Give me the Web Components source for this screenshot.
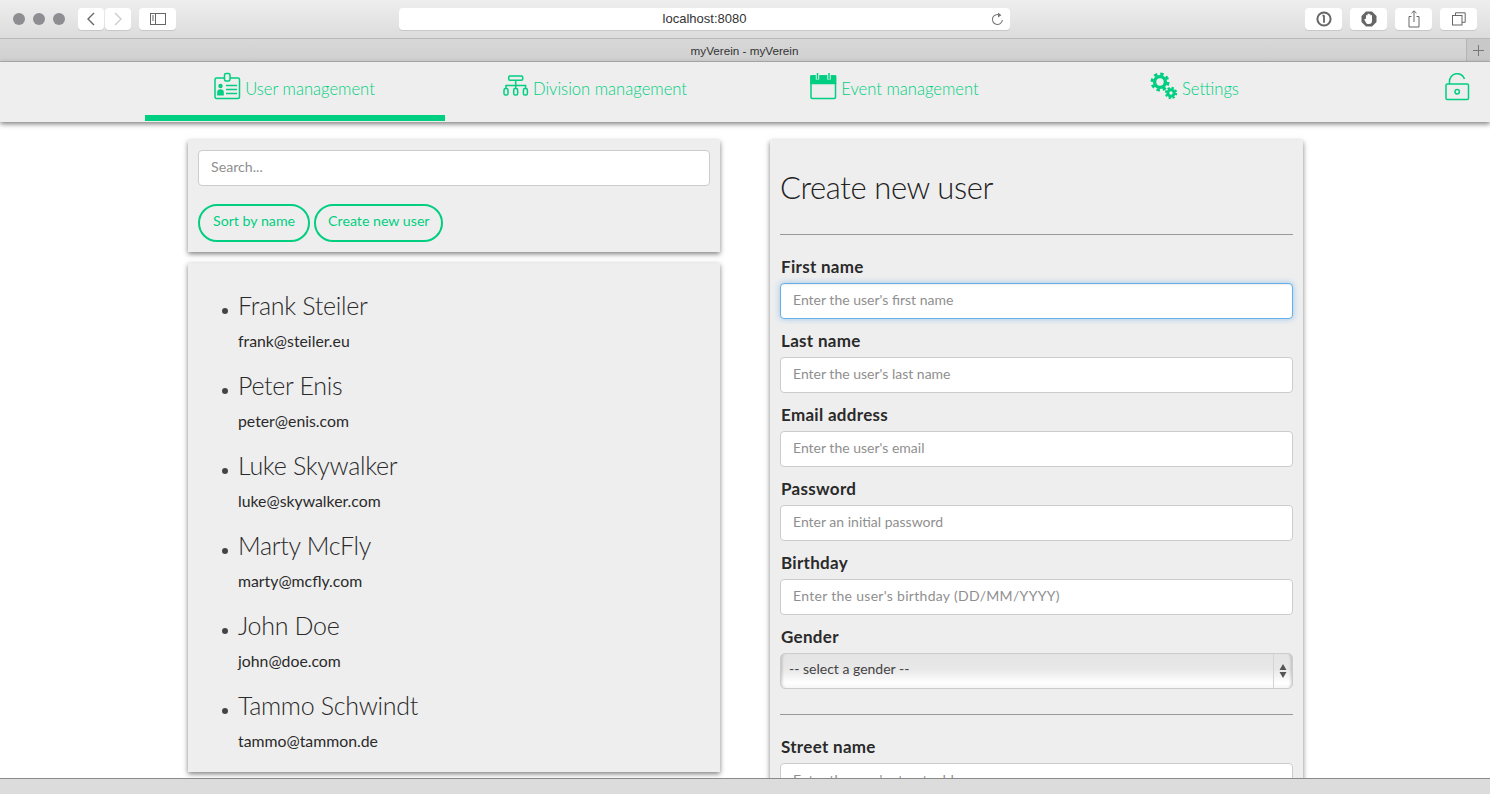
<!DOCTYPE html>
<html lang="en">
<head>
<meta charset="utf-8">
<title>myVerein - myVerein</title>
<style>
    html, body {
        margin: 0;
        height: 100%;
        overflow: hidden;
        background: #fff;
        font-family: "Lato", "Liberation Sans", sans-serif;
        color: #333;
    }

    #page {
        display: flex;
        flex-direction: column;
        height: 794px;
    }

    #content {
        flex: 1;
        min-height: 0;
        overflow: hidden;
        display: grid;
        grid-template-columns: 532px 533px;
        column-gap: 50px;
        align-items: start;
        padding: 18px 0 0 188px;
    }

    #left {
        display: flex;
        flex-direction: column;
        gap: 11px;
    }

    svg {
        display: block;
    }
</style>
</head>
<body>
<div id="page">
    <browser-chrome url="localhost:8080" title="myVerein - myVerein"></browser-chrome>
    <app-nav>
        <nav-item active label="User management">
            <svg slot="icon" width="27" height="28" viewBox="0 0 27 28" fill="none" stroke="#00ce80" stroke-width="1.5">
                <rect x="1" y="6" width="24.5" height="20.5" rx="1.5"/>
                <rect x="10.5" y="1.5" width="5.5" height="7.5" rx="1.5" fill="#eee"/>
                <circle cx="6.5" cy="14" r="2.2" fill="#00ce80" stroke="none"/>
                <path d="M3.2 23.5v-3a3.3 3.3 0 0 1 6.6 0v3z" fill="#00ce80" stroke="none"/>
                <path d="M12 13.5h11M12 17.5h11M12 21.5h11"/>
            </svg>
        </nav-item>
        <nav-item label="Division management" style="--nudge: 0">
            <svg slot="icon" width="26" height="22" viewBox="0 0 26 22" fill="none" stroke="#00ce80" stroke-width="1.5">
                <rect x="5.7" y="1" width="14" height="4.2" rx="1.2"/>
                <path d="M12.7 5.2v8.6M3 13.5v-3h19.6v3"/>
                <rect x="1" y="13.6" width="4" height="6.4" rx="1.6"/>
                <rect x="10.7" y="13.6" width="4" height="6.4" rx="1.6"/>
                <rect x="20.4" y="13.6" width="4" height="6.4" rx="1.6"/>
            </svg>
        </nav-item>
        <nav-item label="Event management">
            <svg slot="icon" width="27" height="28" viewBox="0 0 27 28" fill="none" stroke="#00ce80" stroke-width="1.5">
                <rect x="1" y="4" width="24.5" height="22.5" rx="1.2"/>
                <path d="M1 4h24.5v7.5H1z" fill="#00ce80"/>
                <path d="M7.5 1v6.5M19 1v6.5" stroke="#eee" stroke-width="3.4"/>
                <path d="M7.5 1v6M19 1v6"/>
            </svg>
        </nav-item>
        <nav-item label="Settings">
            <svg slot="icon" width="28" height="28" viewBox="0 0 28 28" fill="none" stroke="#00ce80">
                <circle cx="10" cy="10" r="5.4" stroke-width="3.4"/>
                <circle cx="10" cy="10" r="8" stroke-width="3" stroke-dasharray="3.4 2.88"/>
                <circle cx="21" cy="21" r="3.2" stroke-width="3"/>
                <circle cx="21" cy="21" r="5.1" stroke-width="2.2" stroke-dasharray="2.2 1.8"/>
            </svg>
        </nav-item>
        <svg slot="end" width="25" height="28" viewBox="0 0 25 28" fill="none" stroke="#00ce80" stroke-width="1.5">
            <rect x="1" y="11" width="22.5" height="15.5" rx="1.2"/>
            <path d="M4.5 11V8.5a7.7 7.7 0 0 1 15-2.6"/>
            <circle cx="12.2" cy="18.8" r="2.2"/>
        </svg>
    </app-nav>
    <main id="content">
        <div id="left">
            <search-card></search-card>
            <user-list>
                <user-item name="Frank Steiler" email="frank@steiler.eu"></user-item>
                <user-item name="Peter Enis" email="peter@enis.com"></user-item>
                <user-item name="Luke Skywalker" email="luke@skywalker.com"></user-item>
                <user-item name="Marty McFly" email="marty@mcfly.com"></user-item>
                <user-item name="John Doe" email="john@doe.com"></user-item>
                <user-item name="Tammo Schwindt" email="tammo@tammon.de"></user-item>
            </user-list>
        </div>
        <create-user-form>
            <form-field label="First name" placeholder="Enter the user's first name" focused></form-field>
            <form-field label="Last name" placeholder="Enter the user's last name"></form-field>
            <form-field label="Email address" placeholder="Enter the user's email"></form-field>
            <form-field label="Password" placeholder="Enter an initial password"></form-field>
            <form-field label="Birthday" placeholder="Enter the user's birthday (DD/MM/YYYY)" style="--track: .3px"></form-field>
            <gender-field></gender-field>
            <form-field slot="address" label="Street name" placeholder="Enter the user's street address"></form-field>
        </create-user-form>
    </main>
    <status-bar></status-bar>
</div>

<script>
const chromeTemplate = document.createElement("template");
chromeTemplate.innerHTML = `
    <style>
        :host {
            display: block;
            flex: none;
            font-family: "Liberation Sans", Arial, sans-serif;
            color: #333;
        }

        .toolbar {
            display: flex;
            align-items: center;
            box-sizing: border-box;
            height: 39px;
            padding: 0 13px 1px;
            background: linear-gradient(#eeeeee, #dcdcdc);
            border-bottom: 1px solid #b8b8b8;
        }

        .dots {
            display: flex;
            gap: 8px;
            margin: 0 13px 0 0;
        }

        .dots i {
            width: 12px;
            height: 12px;
            border-radius: 50%;
            background: #8e8d92;
        }

        .btn {
            display: flex;
            align-items: center;
            justify-content: center;
            box-sizing: border-box;
            width: 37px;
            height: 22px;
            background: #fff;
            border-radius: 4px;
            box-shadow: 0 1px 0 #c8c8c8;
        }

        .nav-btn {
            width: 26px;
        }

        .url {
            display: flex;
            align-items: center;
            justify-content: center;
            position: relative;
            width: 611px;
            height: 22px;
            margin-left: 223px;
            background: #fff;
            border-radius: 4px;
            box-shadow: 0 1px 0 #c8c8c8;
            font-size: 13px;
        }

        .reload {
            position: absolute;
            right: 6px;
            top: 4px;
        }

        .right {
            display: flex;
            gap: 8px;
            margin-left: auto;
        }

        .tabs {
            display: flex;
            align-items: center;
            box-sizing: border-box;
            height: 23px;
            background: linear-gradient(#d8d8d8, #d0d0d0);
            border-bottom: 1px solid #b4b4b4;
            font-size: 11.7px;
            color: #333;
        }

        .tab-title {
            flex: 1;
            padding-left: 23px;
            text-align: center;
        }

        .plus {
            display: flex;
            align-items: center;
            justify-content: center;
            align-self: stretch;
            width: 23px;
            background: #c8c8c8;
            border-left: 1px solid #b4b4b4;
        }
    </style>
    <div class="toolbar">
        <div class="dots"><i></i><i></i><i></i></div>
        <div class="btn nav-btn">
            <svg width="10" height="14" viewBox="0 0 10 14" fill="none" stroke="#666" stroke-width="1.4"><path d="M8 1L2 7l6 6"/></svg>
        </div>
        <div class="btn nav-btn" style="margin:0 8px 0 1px">
            <svg width="10" height="14" viewBox="0 0 10 14" fill="none" stroke="#ccc" stroke-width="1.4"><path d="M2 1l6 6-6 6"/></svg>
        </div>
        <div class="btn">
            <svg width="16" height="12" viewBox="0 0 16 12" fill="none" stroke="#666"><rect x=".5" y=".5" width="15" height="11"/><path d="M5.5 .5v11M2 3h2M2 5h2M2 7h2" /></svg>
        </div>
        <div class="url">
            <span class="url-text"></span>
            <svg class="reload" width="13" height="14" viewBox="0 0 13 14" fill="none" stroke="#777" stroke-width="1.1">
                <path d="M9.3 3.4A5 5 0 1 0 11.4 8"/>
                <path d="M7 .6l3.4 2.6L7 5.6z" fill="#777" stroke="none"/>
            </svg>
        </div>
        <div class="right">
            <div class="btn">
                <svg width="16" height="16" viewBox="0 0 16 16" fill="none" stroke="#666" stroke-width="2"><circle cx="8" cy="8" r="6.6"/><path d="M8 4.2v7.6M6.4 4.6H8" stroke-width="1.8"/></svg>
            </div>
            <div class="btn">
                <svg width="16" height="16" viewBox="0 0 16 16"><path d="M5 .5h6L15.5 5v6L11 15.5H5L.5 11V5z" fill="#666"/><path d="M5 8V4.5a.8.8 0 0 1 1.5 0V3a.8.8 0 0 1 1.5 0v.5a.8.8 0 0 1 1.5 0v1a.8.8 0 0 1 1.5 0v5.5a3 3 0 0 1-3 3h-.8c-1 0-1.7-.5-2.2-1.3L3.5 9c-.5-.8.7-1.6 1.5-1z" fill="#fff"/></svg>
            </div>
            <div class="btn">
                <svg width="12" height="18" viewBox="0 0 12 18" fill="none" stroke="#666"><path d="M3.5 6.5H1v10.5h10V6.5H8.5M6 12V1M3.5 3.2L6 .8l2.5 2.4"/></svg>
            </div>
            <div class="btn">
                <svg width="14" height="14" viewBox="0 0 14 14" fill="none" stroke="#666"><rect x=".5" y="3.5" width="9.5" height="9.5"/><path d="M3.5 3.5V.8h9.7v9.5H10"/></svg>
            </div>
        </div>
    </div>
    <div class="tabs">
        <div class="tab-title"></div>
        <div class="plus">
            <svg width="11" height="11" viewBox="0 0 11 11" stroke="#777"><path d="M5.5 0v11M0 5.5h11"/></svg>
        </div>
    </div>
`;

class BrowserChrome extends HTMLElement {
    constructor() {
        super();
        this.attachShadow({ mode: "open" });
        this.shadowRoot.appendChild(chromeTemplate.content.cloneNode(true));
        this.shadowRoot.querySelector(".url-text").textContent = this.getAttribute("url");
        this.shadowRoot.querySelector(".tab-title").textContent = this.getAttribute("title");
    }
}

class AppNav extends HTMLElement {
    constructor() {
        super();
        this.attachShadow({ mode: "open" }).innerHTML = `
            <style>
                :host {
                    display: flex;
                    flex: none;
                    position: relative;
                    z-index: 2;
                    box-sizing: border-box;
                    height: 60px;
                    padding-left: 145px;
                    background: #eee;
                    box-shadow: 0 2px 5px rgba(0, 0, 0, .5);
                }

                .end {
                    display: flex;
                    justify-content: flex-end;
                    flex: 1;
                    padding: 11px 20px 0 0;
                }
            </style>
            <slot></slot>
            <div class="end"><slot name="end"></slot></div>
        `;
    }
}

class NavItem extends HTMLElement {
    constructor() {
        super();
        this.attachShadow({ mode: "open" }).innerHTML = `
            <style>
                :host {
                    display: flex;
                    justify-content: center;
                    align-items: center;
                    box-sizing: border-box;
                    width: 300px;
                    height: 59px;
                    padding-bottom: 6px;
                    padding-right: var(--nudge, 1px);
                    gap: 4px;
                    color: #00ce80;
                    font-size: 16.6px;
                    font-weight: 300;
                }

                :host([active]) {
                    border-bottom: 6px solid #00ce80;
                    padding-bottom: 0;
                }

                ::slotted(svg) {
                    margin-bottom: 5px;
                }
            </style>
            <slot name="icon"></slot>
            <span>${this.getAttribute("label")}</span>
        `;
    }
}

class SearchCard extends HTMLElement {
    constructor() {
        super();
        this.attachShadow({ mode: "open" }).innerHTML = `
            <style>
                :host {
                    display: block;
                    box-sizing: border-box;
                    height: 112px;
                    padding: 10px;
                    background: #eee;
                    box-shadow: 0 2px 5px rgba(0, 0, 0, .5);
                }

                input {
                    display: block;
                    box-sizing: border-box;
                    width: 100%;
                    height: 36px;
                    padding: 0 12px 4px;
                    background: #fff;
                    border: 1px solid #ccc;
                    border-radius: 4px;
                    font: 400 14.2px "Lato", sans-serif;
                    outline: none;
                }

                input::placeholder {
                    color: #8f8f8f;
                }

                .actions {
                    display: flex;
                    gap: 4px;
                    margin-top: 18px;
                }

                button {
                    height: 38px;
                    padding: 0 13px 5px;
                    background: transparent;
                    border: 2px solid #00ce80;
                    border-radius: 19px;
                    color: #00ce80;
                    font: 400 14.2px "Lato", sans-serif;
                }

                button + button {
                    padding: 0 11px 5px 12px;
                }
            </style>
            <input placeholder="Search...">
            <div class="actions">
                <button>Sort by name</button>
                <button>Create new user</button>
            </div>
        `;
    }
}

class UserList extends HTMLElement {
    constructor() {
        super();
        this.attachShadow({ mode: "open" }).innerHTML = `
            <style>
                :host {
                    display: block;
                    box-sizing: border-box;
                    height: 509px;
                    padding: 24px 0 0 32px;
                    background: #eee;
                    box-shadow: 0 2px 5px rgba(0, 0, 0, .5);
                }
            </style>
            <slot></slot>
        `;
    }
}

class UserItem extends HTMLElement {
    constructor() {
        super();
        this.attachShadow({ mode: "open" }).innerHTML = `
            <style>
                :host {
                    display: block;
                    position: relative;
                    box-sizing: border-box;
                    height: 80px;
                    padding-left: 18px;
                    color: #2a2a2a;
                }

                :host::before {
                    content: "";
                    position: absolute;
                    left: 2px;
                    top: 21px;
                    width: 6px;
                    height: 6px;
                    border-radius: 50%;
                    background: #444;
                }

                .name {
                    font-size: 25px;
                    font-weight: 300;
                    letter-spacing: -.3px;
                    line-height: 36px;
                }

                .email {
                    margin-top: 8px;
                    font-size: 15.8px;
                    font-weight: 400;
                    line-height: 20px;
                }
            </style>
            <div class="name">${this.getAttribute("name")}</div>
            <div class="email">${this.getAttribute("email")}</div>
        `;
    }
}

class CreateUserForm extends HTMLElement {
    constructor() {
        super();
        this.attachShadow({ mode: "open" }).innerHTML = `
            <style>
                :host {
                    display: block;
                    box-sizing: border-box;
                    height: 760px;
                    padding: 0 10px;
                    background: #eee;
                    box-shadow: 0 2px 5px rgba(0, 0, 0, .5);
                }

                h1 {
                    box-sizing: border-box;
                    margin: 0;
                    padding-top: 27px;
                    height: 94px;
                    font-size: 31px;
                    font-weight: 300;
                    letter-spacing: -.4px;
                    line-height: 40px;
                    color: #222;
                }

                .rule {
                    height: 1px;
                    background: #999;
                }

                .fields {
                    display: flex;
                    flex-direction: column;
                    padding-top: 22px;
                }

                .address {
                    margin-top: 13px;
                    border-top: 1px solid #999;
                    padding-top: 22px;
                }
            </style>
            <h1>Create new user</h1>
            <div class="rule"></div>
            <div class="fields"><slot></slot></div>
            <div class="address"><slot name="address"></slot></div>
        `;
    }
}

const fieldStyles = `
    :host {
        display: block;
        height: 74px;
    }

    label {
        display: block;
        height: 20px;
        margin-bottom: 6px;
        padding-left: 1px;
        font-size: 17px;
        font-weight: 700;
        letter-spacing: .3px;
        line-height: 20px;
        color: #2a2a2a;
    }
`;

class FormField extends HTMLElement {
    constructor() {
        super();
        this.attachShadow({ mode: "open" }).innerHTML = `
            <style>
                ${fieldStyles}

                input {
                    display: block;
                    box-sizing: border-box;
                    width: 100%;
                    height: 36px;
                    padding: 0 12px 4px;
                    background: #fff;
                    border: 1px solid #ccc;
                    border-radius: 4px;
                    font: 400 14px "Lato", sans-serif;
                    letter-spacing: var(--track, 0);
                    outline: none;
                }

                input.focused {
                    border-color: #66afe9;
                    box-shadow: inset 0 1px 1px rgba(0, 0, 0, .075), 0 0 6px rgba(102, 175, 233, .6);
                }

                input::placeholder {
                    color: #8f8f8f;
                }
            </style>
            <label>${this.getAttribute("label")}</label>
            <input class="${this.hasAttribute("focused") ? "focused" : ""}">
        `;
        this.shadowRoot.querySelector("input").placeholder = this.getAttribute("placeholder");
    }
}

class GenderField extends HTMLElement {
    constructor() {
        super();
        this.attachShadow({ mode: "open" }).innerHTML = `
            <style>
                ${fieldStyles}

                .wrap {
                    position: relative;
                }

                select {
                    display: block;
                    box-sizing: border-box;
                    width: 100%;
                    height: 36px;
                    padding: 0 8px 6px;
                    appearance: none;
                    background: linear-gradient(#e4e4e4 0, #e8e8e8 45%, #fff 85%, #f6f6f6 100%);
                    border: 1px solid #ccc;
                    border-radius: 5px;
                    box-shadow: inset 4px 0 3px -3px rgba(0, 0, 0, .2), inset -4px 0 3px -3px rgba(0, 0, 0, .2);
                    color: #444;
                    font: 400 14px "Lato", sans-serif;
                }

                .arrows {
                    position: absolute;
                    top: 1px;
                    right: 1px;
                    bottom: 1px;
                    display: flex;
                    align-items: center;
                    justify-content: center;
                    width: 18px;
                    border-left: 1px solid #d4d4d4;
                }
            </style>
            <label>Gender</label>
            <div class="wrap">
                <select><option>-- select a gender --</option></select>
                <div class="arrows">
                    <svg width="8" height="16" viewBox="0 0 8 16" fill="#555"><path d="M4 1l3.5 6H.5zM4 15L.5 9h7z"/></svg>
                </div>
            </div>
        `;
    }
}

class StatusBar extends HTMLElement {
    constructor() {
        super();
        this.attachShadow({ mode: "open" }).innerHTML = `
            <style>
                :host {
                    display: block;
                    flex: none;
                    position: relative;
                    z-index: 2;
                    box-sizing: border-box;
                    height: 16px;
                    background: #dcdcdc;
                    border-top: 1px solid #8a8a8a;
                }
            </style>
        `;
    }
}

window.customElements.define("browser-chrome", BrowserChrome);
window.customElements.define("app-nav", AppNav);
window.customElements.define("nav-item", NavItem);
window.customElements.define("search-card", SearchCard);
window.customElements.define("user-list", UserList);
window.customElements.define("user-item", UserItem);
window.customElements.define("create-user-form", CreateUserForm);
window.customElements.define("form-field", FormField);
window.customElements.define("gender-field", GenderField);
window.customElements.define("status-bar", StatusBar);
</script>
</body>
</html>
